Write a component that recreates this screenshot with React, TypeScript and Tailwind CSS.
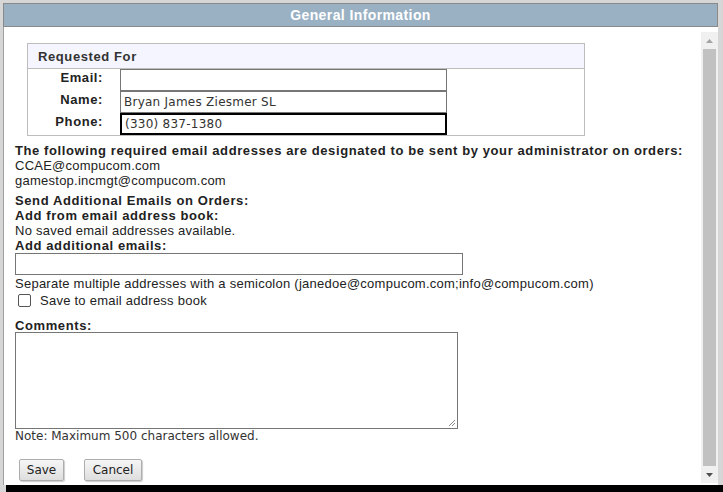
import React from 'react';

const verdana = { fontFamily: '"DejaVu Sans", Verdana, sans-serif', fontSize: 12 };

function Row({ label, value, focus }: { label: string; value?: string; focus?: boolean }) {
  return (
    <div className="flex items-start h-[22px]">
      <div className="w-[92px] pr-[17px] pt-[1px] text-right font-bold tracking-[0.6px] text-[#222]">{label}</div>
      <input
        readOnly
        value={value ?? ''}
        className={`h-[22px] w-[327px] bg-white px-[3px] text-[#333] outline-none ${
          focus ? 'border-2 border-black' : 'border border-[#767676]'
        }`}
        style={verdana}
      />
    </div>
  );
}

export default function App() {
  return (
    <div
      className="w-[723px] h-[492px] overflow-hidden bg-[#d6d6d6] flex flex-col"
      style={{ fontFamily: '"Liberation Sans", Arial, sans-serif' }}
    >
      <div className="flex-1 flex flex-col pl-[3px] pr-[5px] pt-[3px] min-h-0">
        {/* Title bar */}
        <div className="h-[24px] shrink-0 bg-[#9ab1c4] border border-[#8a8a8a] flex items-center justify-center">
          <span className="text-white font-bold text-[14px] tracking-[0.4px]">General Information</span>
        </div>

        <div className="flex-1 flex bg-white min-h-0 border-l border-[#a0a0a0]">
          {/* main content */}
          <div className="flex-1 overflow-hidden pl-[11px] pt-[16px] text-[13px] tracking-[0.25px] text-[#222] leading-[15px]">
            <div className="ml-[12px] w-[558px] border border-[#bdbdbd]">
              <div className="h-[25px] bg-[#f5f5ff] border-b border-[#bdbdbd] flex items-center pl-[10px] font-bold tracking-[0.6px] text-[#333]">
                Requested For
              </div>
              <div className="flex flex-col">
                <Row label="Email:" />
                <Row label="Name:" value="Bryan James Ziesmer SL" />
                <Row label="Phone:" value="(330) 837-1380" focus />
              </div>
            </div>

            <div className="mt-[7px] font-bold tracking-[0.6px] whitespace-nowrap">
              The following required email addresses are designated to be sent by your administrator on orders:
            </div>
            <div>CCAE@compucom.com</div>
            <div>gamestop.incmgt@compucom.com</div>

            <div className="mt-[5px] font-bold tracking-[0.6px]">Send Additional Emails on Orders:</div>
            <div className="font-bold tracking-[0.6px]">Add from email address book:</div>
            <div>No saved email addresses available.</div>
            <div className="font-bold tracking-[0.6px]">Add additional emails:</div>
            <input readOnly className="block h-[22px] w-[448px] border border-[#767676] bg-white outline-none" />
            <div className="mt-[1px] whitespace-nowrap">
              Separate multiple addresses with a semicolon (janedoe@compucom.com;info@compucom.com)
            </div>
            <label className="mt-[1px] h-[16px] flex items-center gap-[9px] pl-[3px]">
              <span className="w-[13px] h-[13px] rounded-[2px] border border-[#555] bg-white" />
              <span>Save to email address book</span>
            </label>

            <div className="mt-[10px] font-bold tracking-[0.6px]">Comments:</div>
            <div className="relative -mt-[1px] w-[443px] h-[97px] border border-[#767676] bg-white">
              <svg className="absolute right-[1px] bottom-[1px]" width="9" height="9" viewBox="0 0 9 9">
                <path d="M8 2L2 8M8 5L5 8" stroke="#888" strokeWidth="1" />
              </svg>
            </div>
            <div className="text-[#333] tracking-normal" style={verdana}>
              Note: Maximum 500 characters allowed.
            </div>

            <div className="mt-[15px] flex gap-[20px] pl-[4px] tracking-normal" style={verdana}>
              <button className="h-[22px] w-[45px] rounded-[2px] border border-[#adadad] bg-gradient-to-b from-[#f6f6f6] to-[#dedede] text-[#222] shadow-[1px_1px_1px_rgba(0,0,0,0.2)]">
                Save
              </button>
              <button className="h-[22px] w-[58px] rounded-[2px] border border-[#adadad] bg-gradient-to-b from-[#f6f6f6] to-[#dedede] text-[#222] shadow-[1px_1px_1px_rgba(0,0,0,0.2)]">
                Cancel
              </button>
            </div>
          </div>

          {/* scrollbar */}
          <div className="w-[17px] mt-[5px] mb-[2px] bg-[#f0f0f0] flex flex-col items-center">
            <div className="h-[17px] flex items-center justify-center">
              <svg width="7" height="4" viewBox="0 0 7 4"><path d="M3.5 0L7 4H0z" fill="#a3a3a3" /></svg>
            </div>
            <div className="flex-1 w-[13px] bg-[#c1c1c1]" />
            <div className="h-[17px] flex items-center justify-center">
              <svg width="7" height="4" viewBox="0 0 7 4"><path d="M0 0H7L3.5 4z" fill="#505050" /></svg>
            </div>
          </div>
        </div>
      </div>
      <div className="h-[7px] shrink-0 ml-[6px] bg-black" />
    </div>
  );
}
